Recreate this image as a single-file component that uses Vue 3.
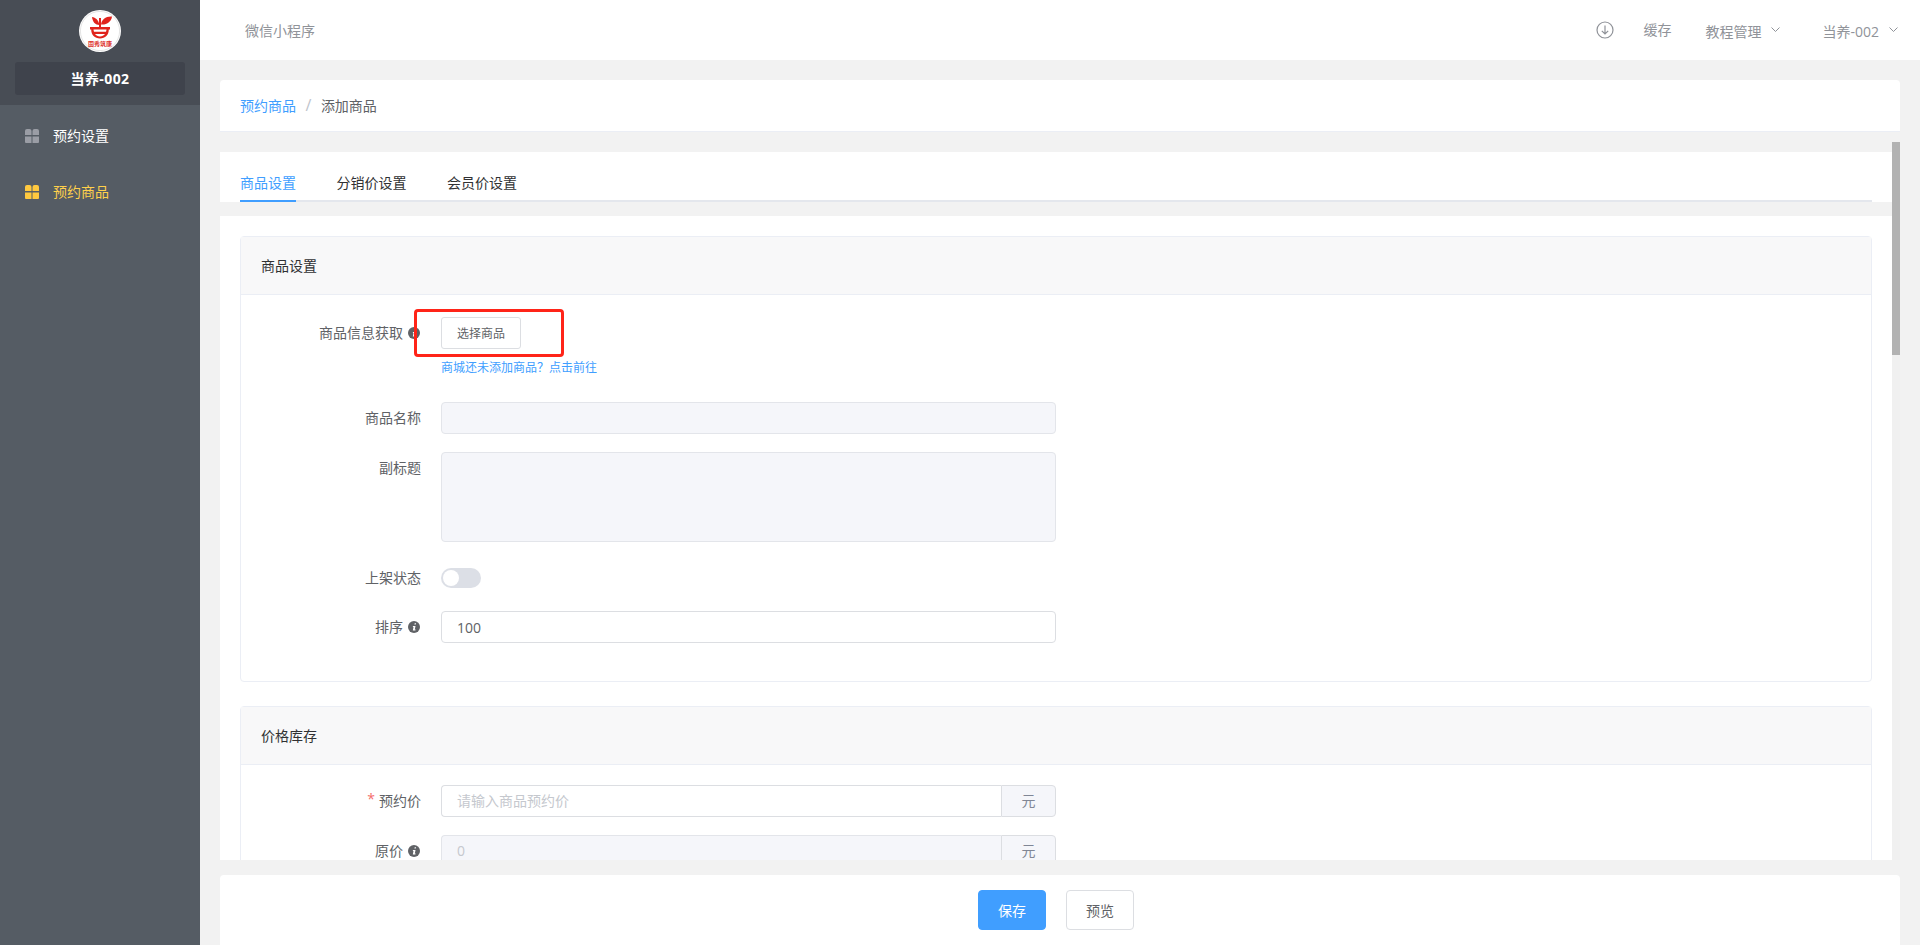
<script setup>
const menus = [
  { name: '预约设置', active: false },
  { name: '预约商品', active: true }
]
const tabs = [
  { name: '商品设置', active: true },
  { name: '分销价设置', active: false },
  { name: '会员价设置', active: false }
]
</script>

<template>
  <div class="app">
    <aside class="side">
      <div class="brand">
        <svg class="logo" width="42" height="42" viewBox="0 0 42 42">
          <circle cx="21" cy="21" r="21" fill="#fff" />
          <circle cx="21" cy="21" r="19.6" fill="none" stroke="#d9d9d9" stroke-width="0.7" />
          <path d="M13 7C16.500 7.500 19.800 10 20.300 15C16.500 15 13.500 12 13 7Z" fill="#e0231c" />
          <path d="M33 6.500C32.500 11.500 28 15 22 14.500C22.500 9.500 27 6 33 6.500Z" fill="#e0231c" />
          <path d="M20 8H22V28H20Z" fill="#e0231c" />
          <path d="M11 17H31V19.500H29.800C29.800 25 26.300 28.500 21 28.500C15.700 28.500 12.200 25 12.200 19.500H11Z" fill="#e0231c" />
          <path d="M14.500 19.500H27.500C27.400 20.600 27.200 21.200 27 21.800H15C14.800 21.200 14.600 20.600 14.500 19.500ZM16 24H26C24.800 25.600 23.100 26.400 21 26.400C18.900 26.400 17.200 25.600 16 24Z" fill="#fff" />
          <text x="21" y="36" text-anchor="middle" class="logo-text">固秀筑康</text>
        </svg>
        <div class="shop">当养-002</div>
      </div>
      <nav class="menu">
        <a v-for="m in menus" :key="m.name" class="menu-item" :class="{ on: m.active }">
          <svg class="grid-icon" width="14" height="14" viewBox="0 0 14 14" fill="currentColor">
            <path d="M0 2a2 2 0 0 1 2-2h2.500a2 2 0 0 1 2 2v4H0Z" />
            <path d="M7.500 2a2 2 0 0 1 2-2H12a2 2 0 0 1 2 2v4H7.500Z" />
            <path d="M0 7.500h6.500V14H1a1 1 0 0 1-1-1Z" />
            <path d="M7.500 7.500H14V13a1 1 0 0 1-1 1H7.500Z" />
          </svg>
          <span>{{ m.name }}</span>
        </a>
      </nav>
    </aside>

    <main class="main">
      <header class="top">
        <span class="top-title">微信小程序</span>
        <div class="top-right">
          <svg class="dl" width="18" height="18" viewBox="0 0 18 18" fill="none" stroke="#8f9298" stroke-width="1.200">
            <circle cx="9" cy="9" r="8" />
            <path d="M9 4.500V13M5.800 9.800L9 13L12.200 9.800" />
          </svg>
          <span class="cache">缓存</span>
          <span class="drop">教程管理
            <svg width="9" height="6" viewBox="0 0 9 6" fill="none" stroke="#8f9298"><path d="M0.500 0.500L4.500 4.500L8.500 0.500" /></svg>
          </span>
          <span class="drop user">当养-002
            <svg width="9" height="6" viewBox="0 0 9 6" fill="none" stroke="#8f9298"><path d="M0.500 0.500L4.500 4.500L8.500 0.500" /></svg>
          </span>
        </div>
      </header>

      <div class="crumb">
        <a class="link">预约商品</a>
        <span class="sep">/</span>
        <span>添加商品</span>
      </div>

      <div class="scroll-wrap">
        <div class="scroll">
          <div class="tabs-card">
            <div class="tabs">
              <span v-for="t in tabs" :key="t.name" class="tab" :class="{ on: t.active }">{{ t.name }}</span>
            </div>
          </div>

          <div class="form-card">
            <section class="box">
              <div class="box-head">商品设置</div>
              <div class="box-body first">
                <div class="row fetch">
                  <label class="label">商品信息获取
                    <svg class="info" width="12" height="12" viewBox="0 0 12 12"><circle cx="6" cy="6" r="6" fill="#606266" /><path d="M6.700 2.300h1.400l-.3 1.300H6.400ZM5 5h2.500L6.800 8.500h.9l-.3 1H4.800l.7-3.500h-.7Z" fill="#fff" /></svg>
                  </label>
                  <div class="ctrl">
                    <div class="pick-wrap">
                      <button class="btn-small">选择商品</button>
                      <span class="mark"></span>
                    </div>
                    <a class="hint">商城还未添加商品？点击前往</a>
                  </div>
                </div>
                <div class="row">
                  <label class="label">商品名称</label>
                  <div class="ctrl"><div class="input disabled"></div></div>
                </div>
                <div class="row">
                  <label class="label">副标题</label>
                  <div class="ctrl"><div class="input disabled area"></div></div>
                </div>
                <div class="row state">
                  <label class="label">上架状态</label>
                  <div class="ctrl"><span class="switch"><i></i></span></div>
                </div>
                <div class="row">
                  <label class="label">排序
                    <svg class="info" width="12" height="12" viewBox="0 0 12 12"><circle cx="6" cy="6" r="6" fill="#606266" /><path d="M6.700 2.300h1.400l-.3 1.300H6.400ZM5 5h2.500L6.800 8.500h.9l-.3 1H4.800l.7-3.500h-.7Z" fill="#fff" /></svg>
                  </label>
                  <div class="ctrl"><div class="input value">100</div></div>
                </div>
              </div>
            </section>

            <section class="box stock">
              <div class="box-head">价格库存</div>
              <div class="box-body">
                <div class="row">
                  <label class="label"><em>*</em>预约价</label>
                  <div class="ctrl">
                    <div class="group">
                      <div class="input ph">请输入商品预约价</div>
                      <span class="addon">元</span>
                    </div>
                  </div>
                </div>
                <div class="row">
                  <label class="label">原价
                    <svg class="info" width="12" height="12" viewBox="0 0 12 12"><circle cx="6" cy="6" r="6" fill="#606266" /><path d="M6.700 2.300h1.400l-.3 1.300H6.400ZM5 5h2.500L6.800 8.500h.9l-.3 1H4.800l.7-3.500h-.7Z" fill="#fff" /></svg>
                  </label>
                  <div class="ctrl">
                    <div class="group">
                      <div class="input ph disabled">0</div>
                      <span class="addon">元</span>
                    </div>
                  </div>
                </div>
              </div>
            </section>
          </div>
        </div>
        <div class="track"><div class="thumb"></div></div>
      </div>

      <footer class="foot">
        <button class="btn primary">保存</button>
        <button class="btn">预览</button>
      </footer>
    </main>
  </div>
</template>

<style scoped>
.app {
  display: flex;
  height: 100vh;
  overflow: hidden;
  background: #f2f2f2;
  font-family: "Open Sans", "Noto Sans CJK SC", sans-serif;
  font-size: 14px;
  color: #606266;
}
.side {
  width: 200px;
  flex: none;
  background: #555c64;
}
.brand {
  height: 105px;
  box-sizing: border-box;
  padding-top: 10px;
  background: #484d55;
  display: flex;
  flex-direction: column;
  align-items: center;
}
.logo { display: block; flex: none; }
.logo-text { font-size: 6px; font-weight: 700; fill: #dc2f2a; font-family: "Noto Sans CJK SC", sans-serif; }
.shop {
  width: 170px;
  height: 33px;
  margin-top: 10px;
  border-radius: 3px;
  background: #3f434c;
  color: #fff;
  font-weight: 700;
  letter-spacing: 0.4px;
  line-height: 33px;
  text-align: center;
}
.menu { padding-top: 2px; }
.menu-item {
  height: 56px;
  padding-left: 25px;
  display: flex;
  align-items: center;
  gap: 14px;
  color: #fff;
}
.menu-item .grid-icon { color: #9a9da5; margin-top: 2px; }
.menu-item.on { color: #ffd04b; }
.menu-item.on .grid-icon { color: #ffc93f; }

.main {
  flex: 1;
  min-width: 0;
  display: flex;
  flex-direction: column;
}
.top {
  height: 60px;
  flex: none;
  background: #fff;
  display: flex;
  align-items: center;
  justify-content: space-between;
  padding: 0 22px 0 45px;
  color: #909399;
}
.top-right { display: flex; align-items: center; }
.dl { display: block; margin-right: 29px; }
.cache { margin-right: 34px; margin-top: -2px; }
.drop { display: flex; align-items: center; margin-top: 2px; }
.drop svg { margin-left: 10px; margin-top: -2px; }
.user { margin-left: 42px; }

.crumb {
  height: 52px;
  flex: none;
  box-sizing: border-box;
  margin: 20px 20px 10px 20px;
  padding: 0 0 2px 20px;
  background: #fff;
  border-bottom: 1px solid #ebeef5;
  border-radius: 4px 4px 0 0;
  display: flex;
  align-items: center;
}
.link { color: #409eff; }
.sep { color: #c0c4cc; margin: 0 9.500px; font-size: 16px; }

.scroll-wrap {
  flex: 1;
  min-height: 0;
  margin: 0 20px;
  position: relative;
  overflow: hidden;
}
.scroll {
  height: 100%;
  box-sizing: border-box;
  padding: 10px 8px 0 0;
  overflow: hidden;
}
.track {
  position: absolute;
  top: 0;
  right: 0;
  bottom: 0;
  width: 8px;
  background: #f0f0f0;
}
.thumb {
  height: 213px;
  background: #b2b2b2;
}

.tabs-card {
  height: 50px;
  padding: 0 20px;
  background: #fff;
}
.tabs {
  height: 50px;
  box-sizing: border-box;
  border-bottom: 2px solid #e4e7ed;
  display: flex;
  gap: 40.5px;
}
.tab {
  height: 50px;
  box-sizing: border-box;
  line-height: 62px;
  color: #303133;
}
.tab.on {
  color: #409eff;
  border-bottom: 2px solid #409eff;
}
.form-card {
  margin-top: 14px;
  padding: 20px;
  background: #fff;
}
.box {
  box-sizing: border-box;
  border: 1px solid #ebeef5;
  border-radius: 4px;
}
.stock {
  margin-top: 24px;
  min-height: 600px;
}
.box-head {
  height: 58px;
  box-sizing: border-box;
  padding-left: 20px;
  background: #f8f8f9;
  border-bottom: 1px solid #ebeef5;
  line-height: 57px;
  color: #303133;
}
.box-body { padding-top: 20px; }
.box-body.first { padding: 22px 0 38px; }
.row {
  display: flex;
  margin-bottom: 18px;
}
.row:last-child { margin-bottom: 0; }
.row.fetch { margin-bottom: 25px; }
.row.state { margin-top: 20px; margin-bottom: 17px; }
.label {
  width: 180px;
  flex: none;
  display: flex;
  align-items: center;
  justify-content: flex-end;
  box-sizing: border-box;
  height: 32px;
  padding-bottom: 2px;
  text-align: right;
  color: #606266;
}
.label em { color: #f56c6c; font-style: normal; margin-right: 4px; margin-top: -3px; }
.info { margin: 2px 1px 0 5px; flex: none; }
.ctrl {
  width: 615px;
  margin-left: 20px;
  flex: none;
}
.pick-wrap { position: relative; height: 32px; }
.btn-small {
  width: 80px;
  height: 32px;
  box-sizing: border-box;
  padding: 0;
  border: 1px solid #dcdee2;
  border-radius: 3px;
  background: #fff;
  color: #606266;
  font: inherit;
  font-size: 12px;
}
.mark {
  position: absolute;
  left: -27px;
  top: -8px;
  width: 150px;
  height: 48px;
  box-sizing: border-box;
  border: 3px solid #ff2418;
  border-radius: 4px;
  pointer-events: none;
}
.hint {
  display: block;
  margin-top: 9px;
  height: 19px;
  line-height: 20px;
  font-size: 12px;
  color: #409eff;
}
.input {
  height: 32px;
  box-sizing: border-box;
  border: 1px solid #dcdee2;
  border-radius: 4px;
  background: #fff;
  padding-left: 15px;
  line-height: 30px;
  color: #606266;
  font-size: 13px;
}
.input.disabled { background: #f5f6fa; border-color: #e3e5ea; }
.input.area { height: 90px; }
.input.value { font-size: 14px; line-height: 32px; }
.input.ph { color: #c5c8ce; font-size: 14px; }
.group { display: flex; }
.group .input {
  flex: 1;
  border-radius: 4px 0 0 4px;
  border-right: 0;
}
.addon {
  width: 55px;
  box-sizing: border-box;
  height: 32px;
  background: #f5f6fa;
  border: 1px solid #dcdee2;
  border-radius: 0 4px 4px 0;
  text-align: center;
  line-height: 30px;
  color: #808695;
}
.switch {
  display: block;
  width: 40px;
  height: 20px;
  margin-top: 6px;
  border-radius: 10px;
  background: #dcdfe6;
  position: relative;
}
.switch i {
  position: absolute;
  left: 2px;
  top: 2px;
  width: 16px;
  height: 16px;
  border-radius: 50%;
  background: #fff;
}
.foot {
  height: 70px;
  flex: none;
  box-sizing: border-box;
  margin: 15px 20px 0;
  padding-right: 8px;
  background: #fff;
  border-radius: 4px 4px 0 0;
  display: flex;
  align-items: center;
  justify-content: center;
  gap: 20px;
}
.btn {
  width: 68px;
  height: 40px;
  box-sizing: border-box;
  padding: 0;
  border: 1px solid #dcdee2;
  border-radius: 4px;
  background: #fff;
  color: #606266;
  font: inherit;
}
.btn.primary {
  background: #409eff;
  border-color: #409eff;
  color: #fff;
}
</style>
